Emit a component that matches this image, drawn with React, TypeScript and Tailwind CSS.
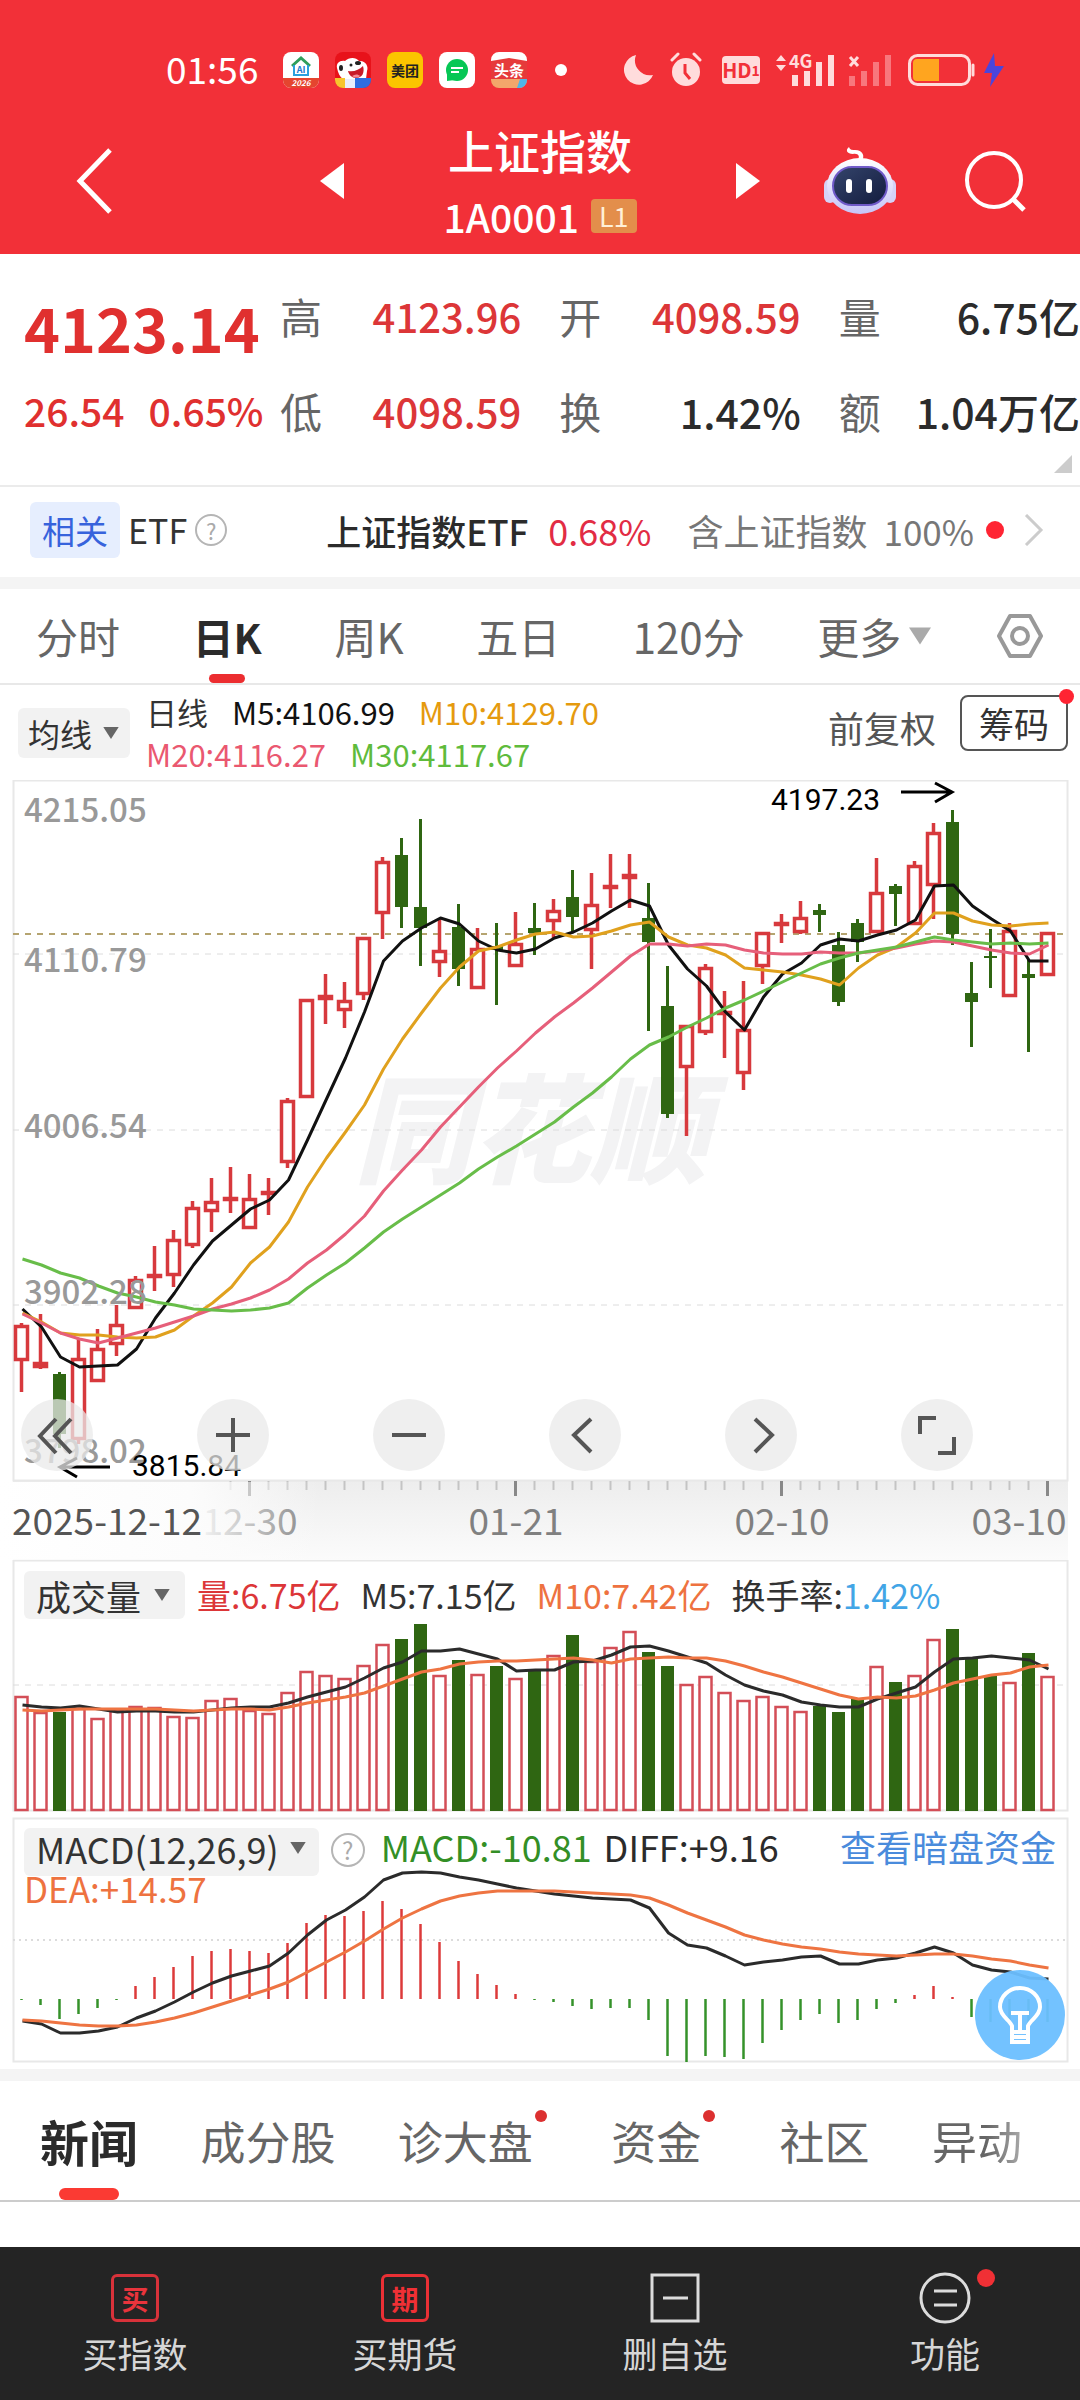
import type { ReactNode } from "react";

type Candle = [up: 0 | 1, high: number, top: number, bottom: number, low: number];

// Vertical positions of every daily candle in chart units.
const CANDLES: Candle[] = [
  [1, 1323, 1325, 1361, 1392], [1, 1314, 1362, 1368, 1369], [0, 1372, 1374, 1434, 1448], [1, 1338, 1358, 1440, 1444],
  [1, 1329, 1348, 1382, 1382], [1, 1305, 1324, 1345, 1356], [1, 1276, 1279, 1309, 1309], [1, 1246, 1274, 1278, 1291],
  [1, 1230, 1239, 1276, 1287], [1, 1201, 1207, 1246, 1248], [1, 1178, 1201, 1212, 1232], [1, 1167, 1197, 1200, 1213],
  [1, 1174, 1198, 1229, 1229], [1, 1178, 1191, 1194, 1215], [1, 1098, 1100, 1163, 1168], [1, 999, 999, 1098, 1098],
  [1, 974, 995, 1000, 1024], [1, 982, 1000, 1011, 1028], [1, 937, 937, 995, 1000], [1, 857, 861, 914, 939],
  [0, 838, 855, 907, 928], [0, 819, 907, 928, 966], [1, 918, 950, 963, 977], [0, 904, 927, 969, 986],
  [1, 928, 948, 989, 989], [0, 923, 946, 950, 1005], [1, 912, 943, 967, 967], [0, 903, 928, 933, 955],
  [1, 899, 910, 922, 938], [0, 870, 897, 917, 933], [1, 873, 904, 931, 969], [1, 854, 885, 889, 908],
  [1, 854, 874, 879, 908], [0, 883, 918, 942, 1031], [0, 966, 1006, 1114, 1118], [1, 1025, 1025, 1068, 1136],
  [1, 964, 967, 1033, 1035], [1, 991, 1011, 1015, 1058], [1, 981, 1029, 1074, 1090], [1, 932, 932, 967, 984],
  [1, 914, 922, 926, 943], [1, 901, 917, 933, 934], [0, 904, 910, 915, 932], [0, 932, 945, 1002, 1006],
  [0, 919, 923, 942, 962], [1, 858, 892, 933, 933], [0, 884, 886, 894, 926], [1, 861, 865, 925, 925],
  [1, 823, 832, 886, 919], [0, 810, 822, 934, 945], [0, 962, 993, 1002, 1047], [0, 929, 956, 958, 988],
  [1, 923, 930, 997, 997], [0, 960, 974, 978, 1052], [1, 932, 932, 976, 976],
];

const MA5 = [1309, 1327, 1357, 1367, 1366, 1365, 1349, 1318, 1293, 1265, 1241, 1225, 1209, 1200, 1180, 1140, 1099, 1058, 1012, 961, 941, 928, 918, 924, 941, 950, 953, 949, 938, 932, 923, 911, 900, 906, 945, 969, 986, 1012, 1030, 997, 974, 963, 945, 939, 941, 935, 930, 920, 886, 885, 906, 919, 931, 961, 961];
const MA10 = [1313, 1322, 1333, 1335, 1335, 1337, 1338, 1337, 1330, 1316, 1303, 1287, 1263, 1247, 1222, 1187, 1158, 1132, 1105, 1069, 1039, 1013, 988, 967, 951, 947, 940, 934, 932, 937, 936, 931, 925, 922, 937, 945, 948, 955, 968, 970, 972, 975, 979, 985, 968, 955, 947, 933, 913, 913, 921, 925, 926, 924, 923];
const MA20 = [1314, 1323, 1333, 1339, 1343, 1338, 1333, 1328, 1322, 1316, 1309, 1304, 1298, 1290, 1279, 1263, 1250, 1234, 1216, 1191, 1170, 1150, 1127, 1107, 1087, 1068, 1051, 1033, 1017, 1003, 988, 972, 956, 944, 944, 946, 944, 945, 950, 953, 954, 954, 952, 953, 953, 951, 948, 944, 941, 942, 946, 950, 953, 954, 945];
const MA30 = [1259, 1265, 1273, 1278, 1286, 1293, 1297, 1302, 1305, 1309, 1310, 1311, 1310, 1308, 1303, 1288, 1275, 1263, 1248, 1232, 1219, 1207, 1195, 1183, 1169, 1157, 1146, 1134, 1122, 1107, 1093, 1077, 1059, 1045, 1037, 1027, 1018, 1008, 1000, 991, 982, 973, 964, 958, 953, 950, 947, 942, 937, 940, 942, 944, 943, 944, 943];

const VOLUME = [1697, 1713, 1712, 1709, 1719, 1711, 1707, 1708, 1717, 1718, 1701, 1699, 1711, 1714, 1693, 1672, 1676, 1679, 1666, 1645, 1639, 1624, 1676, 1660, 1675, 1666, 1679, 1670, 1656, 1635, 1662, 1648, 1632, 1652, 1666, 1685, 1677, 1693, 1701, 1697, 1707, 1712, 1706, 1712, 1698, 1667, 1682, 1676, 1640, 1629, 1658, 1675, 1683, 1653, 1677];
const VOL_M5 = [1705, 1707, 1708, 1706, 1709, 1712, 1711, 1711, 1712, 1712, 1710, 1708, 1707, 1707, 1703, 1697, 1692, 1687, 1678, 1668, 1662, 1651, 1651, 1649, 1654, 1659, 1671, 1670, 1670, 1662, 1661, 1655, 1647, 1646, 1651, 1657, 1663, 1675, 1685, 1691, 1695, 1702, 1705, 1707, 1707, 1699, 1693, 1687, 1672, 1659, 1658, 1656, 1658, 1660, 1669];
const VOL_M10 = [1710, 1711, 1710, 1709, 1709, 1709, 1709, 1709, 1710, 1711, 1710, 1709, 1709, 1710, 1707, 1703, 1700, 1697, 1693, 1686, 1679, 1672, 1669, 1664, 1662, 1661, 1661, 1660, 1659, 1658, 1660, 1663, 1659, 1658, 1657, 1658, 1658, 1661, 1666, 1672, 1677, 1683, 1689, 1695, 1699, 1697, 1698, 1696, 1690, 1683, 1679, 1675, 1673, 1667, 1665];

const MACD = [2000, 2005, 2019, 2014, 2008, 2000, 1986, 1977, 1967, 1956, 1951, 1949, 1951, 1953, 1943, 1923, 1915, 1916, 1911, 1901, 1909, 1924, 1942, 1961, 1974, 1985, 1994, 2000, 2002, 2006, 2009, 2008, 2008, 2020, 2056, 2062, 2056, 2057, 2059, 2043, 2030, 2020, 2014, 2023, 2020, 2009, 2003, 1995, 1986, 1997, 2017, 2022, 2020, 2023, 2022];
const DIFF = [2021, 2024, 2033, 2033, 2031, 2027, 2018, 2011, 2002, 1992, 1983, 1976, 1971, 1966, 1953, 1935, 1920, 1910, 1897, 1880, 1873, 1872, 1873, 1877, 1880, 1884, 1888, 1891, 1894, 1896, 1898, 1899, 1900, 1908, 1933, 1945, 1948, 1956, 1965, 1962, 1960, 1957, 1956, 1964, 1964, 1960, 1958, 1953, 1947, 1953, 1965, 1970, 1972, 1978, 1979];
const DEA = [2020, 2021, 2023, 2025, 2026, 2026, 2025, 2022, 2018, 2013, 2007, 2001, 1995, 1989, 1982, 1972, 1962, 1952, 1941, 1929, 1918, 1909, 1901, 1896, 1893, 1891, 1891, 1891, 1891, 1892, 1893, 1894, 1895, 1898, 1905, 1913, 1920, 1927, 1935, 1940, 1944, 1947, 1949, 1952, 1954, 1955, 1956, 1955, 1954, 1954, 1956, 1959, 1961, 1965, 1968];

const RED = "#d7393d";
const GREEN = "#2f6612";

const xAt = (i: number) => 21.5 + 19 * i;
const line = (ys: number[]) => ys.map((y, i) => `${xAt(i) + 1},${y}`).join(" ");

function Line({ ys, color, width = 3 }: { ys: number[]; color: string; width?: number }) {
  return <polyline points={line(ys)} fill="none" stroke={color} strokeWidth={width} strokeLinejoin="round" />;
}

function Caret({ className }: { className: string }) {
  return (
    <svg viewBox="0 0 18 14" className={className} aria-hidden="true">
      <path d="M0 0h18L9 14z" fill="currentColor" />
    </svg>
  );
}

function Help({ className }: { className: string }) {
  return (
    <button aria-label="帮助" className={`flex items-center justify-center rounded-full border-2 border-[#b5b5b5] text-[#aaa] leading-none ${className}`}>
      ?
    </button>
  );
}

function StatusBar() {
  return (
    <div className="flex h-12 items-center pl-[166px] pr-[76px]">
      <span className="w-[101px] pb-1 text-[37px] leading-none text-white">01:56</span>
      <div className="ml-4 flex items-center gap-4">
        <svg viewBox="0 0 36 36" className="size-9" aria-hidden="true">
          <rect width="36" height="36" rx="8" fill="#fff" />
          <path d="M0 26h36v2a8 8 0 0 1-8 8H8a8 8 0 0 1-8-8z" fill="#e5452f" />
          <path d="M9 14 18 6l9 8" fill="none" stroke="#2f9e5a" strokeWidth="3" />
          <path d="M11 13v10h14V13" fill="none" stroke="#2aa0dd" strokeWidth="2" />
          <text x="18" y="21" fontSize="9" fontWeight="700" textAnchor="middle" fill="#2277cc">AI</text>
          <text x="18" y="34" fontSize="8" fontWeight="700" fontStyle="italic" textAnchor="middle" fill="#fff">2026</text>
        </svg>
        <svg viewBox="0 0 36 36" className="size-9" aria-hidden="true">
          <rect width="36" height="36" rx="8" fill="#e8121a" />
          <path d="M2 16c-1-5 3-8 8-7 4-4 11-4 14 0 6-1 10 5 8 10l-1 8H8c-3-2-5-6-6-11z" fill="#fff" />
          <ellipse cx="6" cy="16" rx="2" ry="3" fill="#222" />
          <circle cx="16" cy="13" r="1.500" fill="#222" />
          <ellipse cx="23" cy="11" rx="3" ry="2" fill="#222" />
          <path d="M13 19c6 1 11-1 15-5 2 7-1 12-7 12-4 0-7-3-8-7z" fill="#c81a28" />
          <path d="M17 24c3-2 6-2 8 0-2 2-5 2-8 0z" fill="#f58a94" />
          <path d="M0 26h10v10H8a8 8 0 0 1-8-8z" fill="#f7c52d" />
          <path d="M10 27h10v9H10z" fill="#e9eefb" />
          <path d="M20 26h16v2a8 8 0 0 1-8 8h-8z" fill="#2f6de0" />
        </svg>
        <span className="flex size-9 items-center justify-center rounded-lg bg-[#fbc400] text-[14px] font-bold leading-none text-[#222]">美团</span>
        <svg viewBox="0 0 36 36" className="size-9" aria-hidden="true">
          <rect width="36" height="36" rx="8" fill="#fff" />
          <circle cx="18" cy="18" r="11" fill="#06c755" />
          <path d="M8 29v-8l8 7z" fill="#06c755" />
          <path d="M12 16h12M12 20h8" stroke="#fff" strokeWidth="2" />
        </svg>
        <svg viewBox="0 0 36 36" className="size-9" aria-hidden="true">
          <rect width="36" height="36" rx="8" fill="#e63a3a" />
          <path d="M0 9V8a8 8 0 0 1 8-8h20a8 8 0 0 1 8 8v1L18 6z" fill="#fff" />
          <path d="M0 27h36v1a8 8 0 0 1-8 8H8a8 8 0 0 1-8-8z" fill="#f3a66b" />
          <path d="M29 27h7v1a8 8 0 0 1-8 8h-2z" fill="#4fb6e8" />
          <text x="18" y="24" fontSize="15" fontWeight="700" textAnchor="middle" fill="#fff">头条</text>
        </svg>
      </div>
      <span className="ml-7 size-3 rounded-full bg-white" />
      <div className="ml-auto flex items-center text-[#ffdcdc]">
        <svg viewBox="0 0 30 32" className="h-8 w-[30px]" aria-hidden="true">
          <path d="M12 1a15 15 0 1 0 17 20A15 15 0 0 1 12 1z" fill="currentColor" />
        </svg>
        <svg viewBox="0 0 32 36" className="ml-4 h-9 w-8" aria-hidden="true">
          <circle cx="16" cy="20" r="14" fill="currentColor" />
          <path d="M2 8 8 2M30 8l-6-6" stroke="currentColor" strokeWidth="3" strokeLinecap="round" />
          <path d="M15 12v9l5 6" fill="none" stroke="#f23038" strokeWidth="3" />
        </svg>
        <span className="ml-5 flex h-7 w-[38px] items-center justify-center rounded bg-[#ffdcdc] text-[20px] font-bold leading-none text-[#f23038]">
          HD<span className="text-[14px]">1</span>
        </span>
        <svg viewBox="0 0 60 36" className="ml-4 h-9 w-[60px] overflow-visible" aria-hidden="true">
          <path d="M0 9l5-6 5 6zM0 13l5 6 5-6z" fill="currentColor" />
          <text x="13" y="16" fontSize="18" fontWeight="700" fill="currentColor">4G</text>
          <path d="M19 23v11M31 19v15M43 10v24M55 3v31" stroke="currentColor" strokeWidth="6" />
        </svg>
        <svg viewBox="0 0 44 36" className="ml-3 h-9 w-11" aria-hidden="true">
          <path d="M2 5l8 9M10 5l-8 9" stroke="currentColor" strokeWidth="3" />
          <path d="M4 24v10M16 19v15M28 10v24M40 3v31" stroke="#f8777d" strokeWidth="6" />
        </svg>
        <svg viewBox="0 0 68 34" className="ml-4 h-[34px] w-[68px]" aria-hidden="true">
          <rect x="1.500" y="2.500" width="60" height="29" rx="8" fill="none" stroke="currentColor" strokeWidth="3" />
          <path d="M9 6h22v22H9a4 4 0 0 1-4-4V10a4 4 0 0 1 4-4z" fill="#ffa51f" />
          <path d="M65 12v10" stroke="currentColor" strokeWidth="3" strokeLinecap="round" />
        </svg>
        <svg viewBox="0 0 20 34" className="ml-2 h-[34px] w-5" aria-hidden="true">
          <path d="M10 0 0 20h8L6 34 20 13h-9z" fill="#4b45dc" />
        </svg>
      </div>
    </div>
  );
}

function Robot() {
  return (
    <svg viewBox="0 0 72 68" className="h-[68px] w-[72px]" aria-hidden="true">
      <defs>
        <linearGradient id="shell" x1="0" y1="0" x2="0" y2="1">
          <stop offset="0" stopColor="#ffffff" />
          <stop offset="1" stopColor="#c6c4f7" />
        </linearGradient>
        <linearGradient id="visor" x1="0" y1="0" x2="1" y2="1">
          <stop offset="0" stopColor="#34446b" />
          <stop offset="1" stopColor="#131c3e" />
        </linearGradient>
      </defs>
      <path d="M33 14c4-5 1-8-4-7-6 0-8-4-4-7 1 3 3 3 6 3 8 0 10 6 7 11z" fill="#fff" />
      <rect y="32" width="12" height="24" rx="6" fill="#d5d2f7" />
      <rect x="60" y="32" width="12" height="24" rx="6" fill="#d5d2f7" />
      <ellipse cx="36" cy="39" rx="33" ry="28" fill="url(#shell)" />
      <rect x="9" y="20" width="54" height="38" rx="19" fill="url(#visor)" stroke="#6f5ac8" strokeWidth="2" />
      <rect x="22" y="32" width="6" height="14" rx="3" fill="#fff" />
      <rect x="42" y="32" width="6" height="14" rx="3" fill="#fff" />
    </svg>
  );
}

function Header() {
  return (
    <header className="bg-[#f23038] pt-[46px] pb-2 text-white">
      <StatusBar />
      <div className="mt-[22px] grid grid-cols-[1fr_440px_1fr] items-center">
        <button aria-label="返回" className="ml-[72px] w-12">
          <svg viewBox="0 0 40 68" className="h-[68px] w-10" aria-hidden="true">
            <path d="M38 3 8 34l30 31" fill="none" stroke="currentColor" strokeWidth="5" />
          </svg>
        </button>
        <div className="flex items-center justify-between">
          <button aria-label="上一个">
            <svg viewBox="0 0 24 36" className="h-9 w-6" aria-hidden="true"><path d="M24 0v36L0 18z" fill="currentColor" /></svg>
          </button>
          <div className="flex flex-col items-center">
            <h1 className="text-[46px] font-medium leading-[66px]">上证指数</h1>
            <div className="flex h-16 items-center gap-3 pt-1">
              <span className="text-[39px] font-medium leading-none">1A0001</span>
              <span className="rounded bg-[#e38e4b] px-2 text-[27px] leading-[34px] text-[#fff0d8]">L1</span>
            </div>
          </div>
          <button aria-label="下一个">
            <svg viewBox="0 0 24 36" className="h-9 w-6" aria-hidden="true"><path d="M0 0v36l24-18z" fill="currentColor" /></svg>
          </button>
        </div>
        <div className="flex items-center justify-end gap-[68px] pr-[54px]">
          <button aria-label="智能助手"><Robot /></button>
          <button aria-label="搜索">
            <svg viewBox="0 0 62 62" className="size-[62px]" aria-hidden="true">
              <circle cx="30" cy="30" r="27" fill="none" stroke="currentColor" strokeWidth="4" />
              <path d="m49 49 11 11" stroke="currentColor" strokeWidth="5" />
            </svg>
          </button>
        </div>
      </div>
    </header>
  );
}

const STATS = [
  { label: "高", value: "4123.96", up: true },
  { label: "开", value: "4098.59", up: true },
  { label: "量", value: "6.75亿", up: false },
  { label: "低", value: "4098.59", up: true },
  { label: "换", value: "1.42%", up: false },
  { label: "额", value: "1.04万亿", up: false },
];

function Quote() {
  return (
    <section className="relative flex border-b-2 border-[#ebebeb] pt-8 pb-[43px] pl-6">
      <div className="w-[256px] font-medium text-[#e0302f]">
        <p className="text-[61px] font-bold leading-[82px]">4123.14</p>
        <p className="mt-2.5 flex gap-6 text-[39px] leading-[64px]">
          <span>26.54</span>
          <span>0.65%</span>
        </p>
      </div>
      <dl className="grid flex-1 grid-cols-3 gap-x-[38px]">
        {STATS.map((s) => (
          <div key={s.label} className="flex h-[60px] items-center justify-between whitespace-nowrap nth-[n+4]:mt-[34px]">
            <dt className="text-[42px] leading-none text-[#666]">{s.label}</dt>
            <dd className={s.up ? "text-[40px] font-medium leading-none text-[#dc3638]" : "text-[41px] font-medium leading-none text-[#2b2b2b]"}>{s.value}</dd>
          </div>
        ))}
      </dl>
      <svg viewBox="0 0 18 18" className="absolute right-2 bottom-3 size-[18px]" aria-hidden="true">
        <path d="M18 0v18H0z" fill="#ccc" />
      </svg>
    </section>
  );
}

function EtfRow() {
  return (
    <section className="flex h-[90px] items-center whitespace-nowrap pl-[30px] pr-9 pb-1 leading-none">
      <span className="rounded-md bg-[#e6eefe] px-3 text-[33px] leading-[56px] text-[#3763dc]">相关</span>
      <span className="ml-2 text-[34px] text-[#333]">ETF</span>
      <Help className="ml-2 size-8 text-[22px]" />
      <a href="#etf" className="ml-auto flex items-center">
        <span className="text-[35px] font-medium text-[#2b2b2b]">上证指数ETF</span>
        <span className="ml-5 text-[36px] text-[#e22c44]">0.68%</span>
        <span className="ml-9 text-[36px] text-[#777]">含上证指数</span>
        <span className="ml-4 text-[35px] text-[#777]">100%</span>
        <span className="ml-3 size-[18px] rounded-full bg-[#ff2433]" />
        <svg viewBox="0 0 20 32" className="ml-5 h-8 w-5" aria-hidden="true">
          <path d="m2 1 15 15L2 31" fill="none" stroke="#ccc" strokeWidth="3" />
        </svg>
      </a>
    </section>
  );
}

function PeriodTabs() {
  return (
    <nav className="flex h-24 items-center justify-between border-b-2 border-[#e8e8e8] pl-9 pr-9 text-[42px] leading-none text-[#666]">
      <button>分时</button>
      <button className="relative flex h-full items-center text-[41px] font-bold text-[#2b2b2b]">
        日K
        <span className="absolute inset-x-0 bottom-0 mx-auto h-[9px] w-9 rounded-full bg-[#ec2d30]" />
      </button>
      <button>周K</button>
      <button>五日</button>
      <button>120分</button>
      <button className="flex items-center gap-2">
        更多
        <Caret className="h-[18px] w-[22px] text-[#aaa]" />
      </button>
      <button aria-label="设置" className="-ml-2">
        <svg viewBox="0 0 48 46" className="h-[46px] w-12" aria-hidden="true">
          <path d="M14 3h20l11 20-11 20H14L3 23z" fill="none" stroke="#999" strokeWidth="4" strokeLinejoin="round" />
          <circle cx="24" cy="23" r="8" fill="none" stroke="#999" strokeWidth="4" />
        </svg>
      </button>
    </nav>
  );
}

function MaRow() {
  return (
    <div className="flex h-[95px] items-center whitespace-nowrap pl-[18px] pr-3">
      <button className="flex h-[50px] items-center gap-2.5 rounded-md bg-[#f2f2f2] px-2.5 text-[32px] leading-none text-[#333]">
        均线
        <Caret className="h-3 w-[18px] text-[#666]" />
      </button>
      <div className="ml-4 text-[31px] leading-[42px]">
        <p className="flex gap-6">
          <span className="text-[#333]">日线</span>
          <span className="text-[#111]">M5:4106.99</span>
          <span className="text-[#e59a0e]">M10:4129.70</span>
        </p>
        <p className="flex gap-6">
          <span className="text-[#ea5870]">M20:4116.27</span>
          <span className="text-[#5fbb3c]">M30:4117.67</span>
        </p>
      </div>
      <button className="mb-3 ml-auto text-[36px] leading-none text-[#555]">前复权</button>
      <button className="relative mb-5 ml-6 h-[56px] rounded-lg border-2 border-[#555] px-[17px] text-[35px] leading-none text-[#333]">
        筹码
        <span className="absolute -top-2 -right-2 size-[15px] rounded-full bg-[#ff2433]" />
      </button>
    </div>
  );
}

const CONTROLS: { name: string; icon: ReactNode }[] = [
  { name: "最早", icon: <path d="M35 20 19 37l16 17M50 20 34 37l16 17" /> },
  { name: "放大", icon: <path d="M36 19v34M19 36h34" /> },
  { name: "缩小", icon: <path d="M19 36h34" /> },
  { name: "左移", icon: <path d="M42 20 25 36l17 17" /> },
  { name: "右移", icon: <path d="m30 20 17 16-17 17" /> },
  { name: "全屏", icon: <path d="M19 35V19h16M53 38v16H37" /> },
];

function PriceChart() {
  return (
    <section className="relative">
      <svg viewBox="0 780 1080 780" className="block w-full" role="img" aria-label="日K线">
        <defs>
          <linearGradient id="axisShade" x1="0" y1="0" x2="0" y2="1">
            <stop offset="0" stopColor="#ededed" />
            <stop offset="1" stopColor="#fbfbfb" />
          </linearGradient>
          <linearGradient id="axisFade" x1="0" y1="0" x2="1" y2="0">
            <stop offset="0" stopColor="#fff" />
            <stop offset="0.600" stopColor="#fcfcfc" />
            <stop offset="1" stopColor="#fcfcfc" stopOpacity="0" />
          </linearGradient>
        </defs>
        <text x="354" y="1174" fontSize="118" fontWeight="900" fontStyle="italic" fill="#f3f3f4">同花顺</text>
        <rect x="13" y="1480" width="1055" height="80" fill="url(#axisShade)" />
        <rect x="13.500" y="780.500" width="1054" height="700" fill="none" stroke="#e8e8e8" strokeWidth="2" />
        <path d="M13 954h1054M13 1130h1054M13 1305h1054" stroke="#dcdcdc" strokeWidth="1" strokeDasharray="6 6" />
        <path d="M13 934h1054" stroke="#b5a470" strokeWidth="2" strokeDasharray="6 6" />
        {CANDLES.map(([up, high, top, bottom, low], i) => {
          const x = xAt(i);
          if (up) {
            return (
              <g key={i} stroke={RED} strokeWidth="3.500">
                <path d={`M${x} ${high}V${top}M${x} ${bottom}V${low}`} />
                <rect x={x - 6} y={top + 1.5} width="12" height={Math.max(bottom - top - 3, 1)} fill={bottom - top < 8 ? RED : "#fff"} />
              </g>
            );
          }
          return (
            <g key={i} fill={GREEN}>
              <rect x={x - 1.5} y={high} width="3" height={low - high} />
              <rect x={x - 6.5} y={top} width="13" height={bottom - top} />
            </g>
          );
        })}
        <Line ys={MA5} color="#111" />
        <Line ys={MA10} color="#e0a11e" />
        <Line ys={MA20} color="#e65f7a" />
        <Line ys={MA30} color="#68bd49" />
        <g fontSize="33" fontWeight="500" fill="#999">
          <text x="24" y="822">4215.05</text>
          <text x="24" y="972">4110.79</text>
          <text x="24" y="1138">4006.54</text>
          <text x="24" y="1304">3902.28</text>
          <text x="24" y="1463">3798.02</text>
        </g>
        <g fontFamily="Roboto" fontSize="30" fill="#000">
          <text x="771" y="810">4197.23</text>
          <text x="132" y="1476">3815.84</text>
        </g>
        <path d="M901 792h50M935 783l17 9-17 10M110 1467H60M77 1458l-17 9 17 10" fill="none" stroke="#000" strokeWidth="3" />
        {CANDLES.map((_, i) => {
          if (i < 11) return null;
          const major = i % 14 === 12;
          return <path key={i} d={`M${xAt(i)} 1481v${major ? 15 : 9}`} stroke={major ? "#888" : "#c4c4c4"} strokeWidth={major ? 3 : 2} />;
        })}
        <g fontSize="37" fill="#808080" textAnchor="middle">
          <text x="250" y="1535">12-30</text>
          <text x="516" y="1535">01-21</text>
          <text x="782" y="1535">02-10</text>
          <text x="1019" y="1535">03-10</text>
        </g>
        <rect x="0" y="1482" width="320" height="77" fill="url(#axisFade)" />
        <text x="12" y="1535" fontSize="37" fill="#555">2025-12-12</text>
      </svg>
      <div className="absolute right-[107px] bottom-[89px] left-[21px] flex justify-between">
        {CONTROLS.map((c) => (
          <button key={c.name} aria-label={c.name} className="size-[72px] rounded-full bg-[#e9e9e9]/75">
            <svg viewBox="0 0 72 72" className="size-[72px]" fill="none" stroke="#555" strokeWidth="4" aria-hidden="true">{c.icon}</svg>
          </button>
        ))}
      </div>
    </section>
  );
}

function VolumeChart() {
  return (
    <section className="relative">
      <svg viewBox="0 1560 1080 256" className="block w-full" role="img" aria-label="成交量">
        <rect x="13.500" y="1560.500" width="1054" height="250" fill="#fff" stroke="#e8e8e8" strokeWidth="2" />
        <path d="M13 1685h1054" stroke="#dcdcdc" strokeWidth="1" strokeDasharray="6 6" />
        {VOLUME.map((top, i) => {
          const up = CANDLES[i][0];
          return up ? (
            <rect key={i} x={xAt(i) - 6} y={top} width="12" height={1810 - top} fill="#fff" stroke="#d34e57" strokeWidth="2.500" />
          ) : (
            <rect key={i} x={xAt(i) - 6.5} y={top} width="13" height={1811 - top} fill={GREEN} />
          );
        })}
        <Line ys={VOL_M5} color="#2b2b2b" />
        <Line ys={VOL_M10} color="#ef7442" />
      </svg>
      <div className="absolute inset-x-6 top-[11px] flex items-center gap-5 whitespace-nowrap text-[34px] leading-[48px] text-[#333]">
        <button className="-mr-2 flex h-12 items-center gap-3 rounded-md bg-[#f2f2f2] pr-3.5 pl-3 text-[35px] leading-none">
          成交量
          <Caret className="h-3 w-[18px] text-[#666]" />
        </button>
        <span className="text-[#dc3638]">量:6.75亿</span>
        <span>M5:7.15亿</span>
        <span className="text-[#ee7240]">M10:7.42亿</span>
        <span>
          换手率:<span className="text-[#42a5e6]">1.42%</span>
        </span>
      </div>
    </section>
  );
}

function MacdChart() {
  return (
    <section className="relative">
      <svg viewBox="0 1816 1080 253" className="block w-full" role="img" aria-label="MACD">
        <rect x="13.500" y="1818.500" width="1054" height="243" fill="#fff" stroke="#e8e8e8" strokeWidth="2" />
        <path d="M13 1940h1054" stroke="#dcdcdc" strokeWidth="2" strokeDasharray="2 4" />
        {MACD.map((y, i) => (
          <path key={i} d={`M${xAt(i)} 1999V${y}`} stroke={y < 1999 ? "#dc3a3a" : "#35922a"} strokeWidth="2.500" />
        ))}
      </svg>
      <div className="absolute inset-x-6 top-2 text-[36px] leading-[38px]">
        <div className="flex items-center whitespace-nowrap">
          <button className="mt-1 flex h-12 items-center gap-2.5 rounded-md bg-[#f2f2f2] px-3 pb-2 text-[36px] leading-none text-[#333]">
            MACD(12,26,9)
            <Caret className="h-3 w-[18px] text-[#666]" />
          </button>
          <Help className="ml-3 size-[34px] text-[24px]" />
          <span className="mb-2 ml-4 text-[#338f26]">MACD:-10.81</span>
          <span className="mb-2 ml-3 text-[#2b2b2b]">DIFF:+9.16</span>
          <a href="#dark-pool" className="mb-2 ml-auto text-[36px] text-[#4a8bdc]">查看暗盘资金</a>
        </div>
        <p className="-mt-1.5 w-fit text-[35px] leading-[36px] text-[#ee7240]">DEA:+14.57</p>
      </div>
      <svg viewBox="0 1816 1080 253" className="pointer-events-none absolute inset-0 w-full" aria-hidden="true">
        <Line ys={DIFF} color="#2b2b2b" />
        <Line ys={DEA} color="#ee7442" />
      </svg>
      <button aria-label="智能解读" className="absolute right-[15px] bottom-[9px] size-[90px] rounded-full bg-[#6bbfff]/95">
        <svg viewBox="0 0 90 90" className="size-[90px]" fill="none" stroke="#fff" strokeWidth="4" aria-hidden="true">
          <path d="M37 62V56c-2-6-12-10-12-19a20 19 0 0 1 40 0c0 9-10 13-12 19v6zM37 62v10h16V62M37 67h16M36 43h18M45 43v18" />
        </svg>
      </button>
    </section>
  );
}

const NEWS_TABS = [
  { label: "成分股", dot: false },
  { label: "诊大盘", dot: true },
  { label: "资金", dot: true },
  { label: "社区", dot: false },
];

function NewsTabs() {
  return (
    <nav className="flex h-[121px] items-center justify-between border-b-2 border-[#ccc] pl-10 pr-[58px] text-[45px] leading-none text-[#666]">
      <button className="relative flex h-full items-center text-[49px] font-bold text-[#2b2b2b]">
        新闻
        <span className="absolute inset-x-0 bottom-0 mx-auto h-3 w-[60px] rounded-full bg-[#fb3a33]" />
      </button>
      {NEWS_TABS.map((t) => (
        <button key={t.label} className={t.dot ? "relative pr-4" : "relative"}>
          {t.label}
          {t.dot && <span className="absolute -top-2 right-0.5 size-3 rounded-full bg-[#dc3030]" />}
        </button>
      ))}
      <button className="bg-gradient-to-r from-[#666] from-60% to-[#aaa] bg-clip-text text-transparent">异动</button>
    </nav>
  );
}

function BottomItem({ label, children }: { label: string; children: ReactNode }) {
  return (
    <button className="flex flex-1 flex-col items-center gap-2 text-[35px] leading-[44px] text-[#d6d6d6]">
      <span className="relative flex h-[50px] items-center">{children}</span>
      {label}
    </button>
  );
}

function BottomBar() {
  return (
    <footer className="flex bg-[#242424] pt-[26px] pb-[26px]">
      <BottomItem label="买指数">
        <span className="flex size-12 items-center justify-center rounded-md border-3 border-[#d8323a] text-[27px] font-bold leading-none text-[#e8343c]">买</span>
      </BottomItem>
      <BottomItem label="买期货">
        <span className="flex size-12 items-center justify-center rounded-md border-3 border-[#ea3035] text-[27px] font-bold leading-none text-[#f03035]">期</span>
      </BottomItem>
      <BottomItem label="删自选">
        <svg viewBox="0 0 50 50" className="size-[50px]" fill="none" stroke="#dcdcdc" strokeWidth="3" aria-hidden="true">
          <path d="M2 2h46v46H2zM13 25h25" />
        </svg>
      </BottomItem>
      <BottomItem label="功能">
        <svg viewBox="0 0 52 52" className="size-[52px]" fill="none" stroke="#dcdcdc" strokeWidth="3" aria-hidden="true">
          <circle cx="26" cy="26" r="24" />
          <path d="M15 19h23M15 33h23" />
        </svg>
        <span className="absolute -top-1 -right-6 size-[18px] rounded-full bg-[#f03035]" />
      </BottomItem>
    </footer>
  );
}

export default function App() {
  return (
    <main className="min-h-screen overflow-hidden bg-white font-['Noto_Sans_CJK_SC','Noto_Sans',sans-serif]">
      <Header />
      <Quote />
      <EtfRow />
      <div className="h-3 bg-[#f4f4f4]" />
      <PeriodTabs />
      <MaRow />
      <PriceChart />
      <VolumeChart />
      <MacdChart />
      <div className="h-3 bg-[#f4f4f4]" />
      <NewsTabs />
      <div className="h-[45px]" />
      <BottomBar />
    </main>
  );
}
